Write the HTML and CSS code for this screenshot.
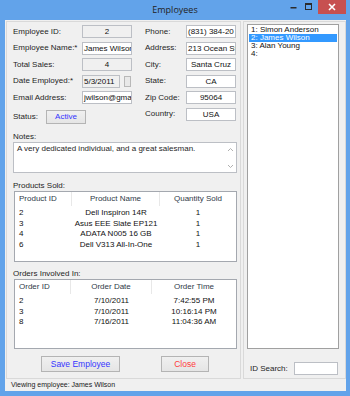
FILE: index.html
```html
<!DOCTYPE html>
<html>
<head>
<meta charset="utf-8">
<title>Employees</title>
<link rel="stylesheet" href="styles.css">
</head>
<body>
<div class="window">
  <div class="titlebar">
    <div class="title">Employees</div>
    <div class="caption-buttons">
      <div class="cb cb-min"><svg width="15" height="14" viewBox="0 0 15 14"><rect x="4.5" y="7" width="6" height="1.5" fill="#2b2b2b"/></svg></div>
      <div class="cb cb-max"><svg width="15" height="14" viewBox="0 0 15 14"><rect x="4.5" y="3.5" width="6" height="6" fill="none" stroke="#2b2b2b" stroke-width="1"/><rect x="4" y="3" width="7" height="2" fill="#2b2b2b"/></svg></div>
      <div class="cb cb-close"><svg width="28" height="14" viewBox="0 0 28 14"><path d="M11 4 L17 10 M17 4 L11 10" stroke="#fff" stroke-width="1.6" fill="none"/></svg></div>
    </div>
  </div>
  <div class="client">
    <div class="panels">
      <div class="panel panel-left">
        <div class="form">
          <div class="subgrid sub-left">
            <div class="lbl">Employee ID:</div>
            <div class="tb ro c">2</div>
            <div class="lbl">Employee Name:*</div>
            <div class="tb">James Wilson</div>
            <div class="lbl">Total Sales:</div>
            <div class="tb ro c">4</div>
            <div class="lbl">Date Employed:*</div>
            <div class="date-cell"><div class="tb ro date">5/3/2011</div><div class="dtbtn"></div></div>
            <div class="lbl">Email Address:</div>
            <div class="tb">jwilson@gma</div>
            <div class="status-row">
              <div class="status-lbl">Status:</div>
              <div class="btn btn-status">Active</div>
            </div>
          </div>
          <div class="subgrid sub-right">
            <div class="lbl">Phone:</div>
            <div class="tb">(831) 384-20</div>
            <div class="lbl">Address:</div>
            <div class="tb">213 Ocean St</div>
            <div class="lbl">City:</div>
            <div class="tb c">Santa Cruz</div>
            <div class="lbl">State:</div>
            <div class="tb c">CA</div>
            <div class="lbl">Zip Code:</div>
            <div class="tb c">95064</div>
            <div class="lbl">Country:</div>
            <div class="tb c">USA</div>
          </div>
        </div>

        <div class="sec-label notes-label">Notes:</div>
        <div class="notes">
          <div class="notes-text">A very dedicated individual, and a great salesman.</div>
          <div class="vscroll">
            <svg width="7" height="5" viewBox="0 0 7 5"><path d="M1 4 L3.5 1.5 L6 4" stroke="#b0b0b0" stroke-width="1" fill="none"/></svg>
            <svg width="7" height="5" viewBox="0 0 7 5"><path d="M1 1 L3.5 3.5 L6 1" stroke="#b0b0b0" stroke-width="1" fill="none"/></svg>
          </div>
        </div>

        <div class="sec-label prod-label">Products Sold:</div>
        <div class="lv lv-products">
          <div class="lv-head">
            <div class="hc l">Product ID</div>
            <div class="hc">Product Name</div>
            <div class="hc last">Quantity Sold</div>
          </div>
          <div class="lv-row"><div class="l">2</div><div>Dell Inspiron 14R</div><div>1</div></div>
          <div class="lv-row"><div class="l">3</div><div>Asus EEE Slate EP121</div><div>1</div></div>
          <div class="lv-row"><div class="l">4</div><div>ADATA N005 16 GB</div><div>1</div></div>
          <div class="lv-row"><div class="l">6</div><div>Dell V313 All-In-One</div><div>1</div></div>
        </div>

        <div class="sec-label orders-label">Orders Involved In:</div>
        <div class="lv lv-orders">
          <div class="lv-head">
            <div class="hc l">Order ID</div>
            <div class="hc">Order Date</div>
            <div class="hc last">Order Time</div>
          </div>
          <div class="lv-row"><div class="l">2</div><div>7/10/2011</div><div>7:42:55 PM</div></div>
          <div class="lv-row"><div class="l">3</div><div>7/10/2011</div><div>10:16:14 PM</div></div>
          <div class="lv-row"><div class="l">8</div><div>7/16/2011</div><div>11:04:36 AM</div></div>
        </div>

        <div class="actions">
          <div class="btn btn-save">Save Employee</div>
          <div class="btn btn-close">Close</div>
        </div>
      </div>

      <div class="panel panel-right">
        <div class="listbox">
          <div class="li">1: Simon Anderson</div>
          <div class="li sel">2: James Wilson</div>
          <div class="li">3: Alan Young</div>
          <div class="li">4:</div>
        </div>
        <div class="search-row">
          <div class="search-lbl">ID Search:</div>
          <div class="tb search-box"></div>
        </div>
      </div>
    </div>
    <div class="statusbar">Viewing employee: James Wilson</div>
  </div>
</div>
</body>
</html>
```

FILE: styles.css
```css
* { box-sizing: border-box; margin: 0; padding: 0; }
html, body { width: 350px; height: 396px; overflow: hidden; }
body {
  background: #62a3ea;
  font-family: "Liberation Sans", Arial, sans-serif;
  font-size: 8px;
  color: #1e1e1e;
}
.window {
  width: 350px;
  height: 396px;
  display: flex;
  flex-direction: column;
  background: #62a3ea;
}
.titlebar {
  height: 20px;
  flex: none;
  display: grid;
  grid-template-columns: 1fr auto 1fr;
  align-items: start;
}
.title {
  grid-column: 2;
  font-family: "Open Sans", "Noto Sans", sans-serif;
  font-size: 9px;
  line-height: 20px;
  color: #222;
}
.caption-buttons {
  grid-column: 3;
  justify-self: end;
  display: flex;
  margin-right: 4px;
}
.cb { height: 14px; width: 15px; }
.cb svg { display: block; }
.cb-close { width: 28px; margin-left: 2px; background: #c75050; }

.client {
  flex: 1;
  margin: 0 4px 5px 5px;
  background: #f0f0f0;
  display: flex;
  flex-direction: column;
}
.panels {
  display: flex;
  gap: 2px;
  margin: 1px 0 0 1px;
  height: 358px;
}
.panel { border: 1px solid #d9d9d9; }
.panel-left {
  width: 235px;
  padding: 1.25px 0 0 6px;
  display: flex;
  flex-direction: column;
}
.panel-right {
  width: 103px;
  display: flex;
  flex-direction: column;
}

/* form */
.form { display: flex; gap: 13px; }
.subgrid {
  display: grid;
  grid-auto-rows: 16.5px;
  align-items: center;
}
.sub-left { grid-template-columns: 69px 50px; }
.sub-right { grid-template-columns: 41px 50px; }
.lbl { white-space: nowrap; line-height: 10px; }
.tb {
  height: 13px;
  border: 1px solid #bcbfc5;
  background: #fff;
  line-height: 11px;
  padding: 0 1px;
  overflow: hidden;
  white-space: nowrap;
  color: #111;
}
.tb.ro { background: #f0f0f0; }
.tb.c { text-align: center; }
.date-cell { display: flex; align-items: center; gap: 4px; }
.tb.date { width: 38px; }
.dtbtn {
  width: 7px;
  height: 11px;
  border: 1px solid #b8b8b8;
  background: #e8e8e8;
}
.status-row {
  grid-column: 1 / span 2;
  align-self: start;
  margin-top: 4.25px;
  display: flex;
  align-items: center;
}
.status-lbl { width: 33px; line-height: 10px; }
.btn {
  border: 1px solid #b4b4b4;
  background: linear-gradient(#f0f0f0, #e5e5e5);
  text-align: center;
  white-space: nowrap;
}
.btn-status {
  width: 40px;
  height: 14px;
  line-height: 12px;
  color: #3535ff;
}

.sec-label { line-height: 10px; }
.notes-label { margin-top: 9.75px; }
.notes {
  width: 224px;
  height: 31px;
  border: 1px solid #bcbfc5;
  background: #fff;
  display: flex;
}
.notes-text { flex: 1; padding: 1px 3px; line-height: 10px; white-space: nowrap; }
.vscroll {
  width: 12px;
  display: flex;
  flex-direction: column;
  justify-content: space-between;
  align-items: center;
  padding: 4px 0 3px;
}
.vscroll svg { display: block; }

.prod-label { margin-top: 8px; }
.orders-label { margin-top: 7px; }
.lv {
  margin-left: 1px;
  width: 223px;
  border: 1px solid #a4a8af;
  background: #fff;
}
.lv-products { height: 71px; }
.lv-orders { height: 70px; }
.lv-products .lv-head, .lv-products .lv-row { grid-template-columns: 57px 88px 76px; }
.lv-orders .lv-head, .lv-orders .lv-row { grid-template-columns: 56px 81px 84px; }
.lv-head {
  display: grid;
  height: 14px;
  line-height: 14px;
  margin-bottom: 2px;
  color: #303a48;
}
.hc { text-align: center; border-right: 1px solid #e8e8e8; white-space: nowrap; }
.hc.last { border-right: none; }
.lv-row {
  display: grid;
  height: 10.5px;
  line-height: 10.5px;
  color: #111;
}
.lv-row > div { text-align: center; white-space: nowrap; }
.lv .l { text-align: left; padding-left: 4px; }
.lv-row > .l { text-align: left; }

.actions {
  margin-top: 7px;
  margin-left: 28px;
  display: flex;
  gap: 41px;
}
.btn-save { width: 79px; height: 16px; line-height: 14px; color: #3535ff; font-size: 8.5px; }
.btn-close { width: 48px; height: 16px; line-height: 14px; color: #ff3b3b; font-size: 8.5px; }

/* right panel */
.listbox {
  margin: 2px 0 0 3px;
  width: 92px;
  height: 325px;
  border: 1px solid #a0a0a0;
  background: #fff;
  padding: 1px;
}
.li { height: 8px; line-height: 8px; padding-left: 2px; white-space: nowrap; color: #111; }
.li.sel { background: #3399ff; color: #fff; }
.search-row {
  margin-top: 13px;
  padding-left: 6px;
  display: flex;
  align-items: center;
}
.search-lbl { width: 44px; line-height: 10px; }
.search-box { width: 44px; }

.statusbar {
  height: 12px;
  line-height: 12px;
  padding-left: 6px;
  font-size: 7px;
  color: #1a1a1a;
}
```
